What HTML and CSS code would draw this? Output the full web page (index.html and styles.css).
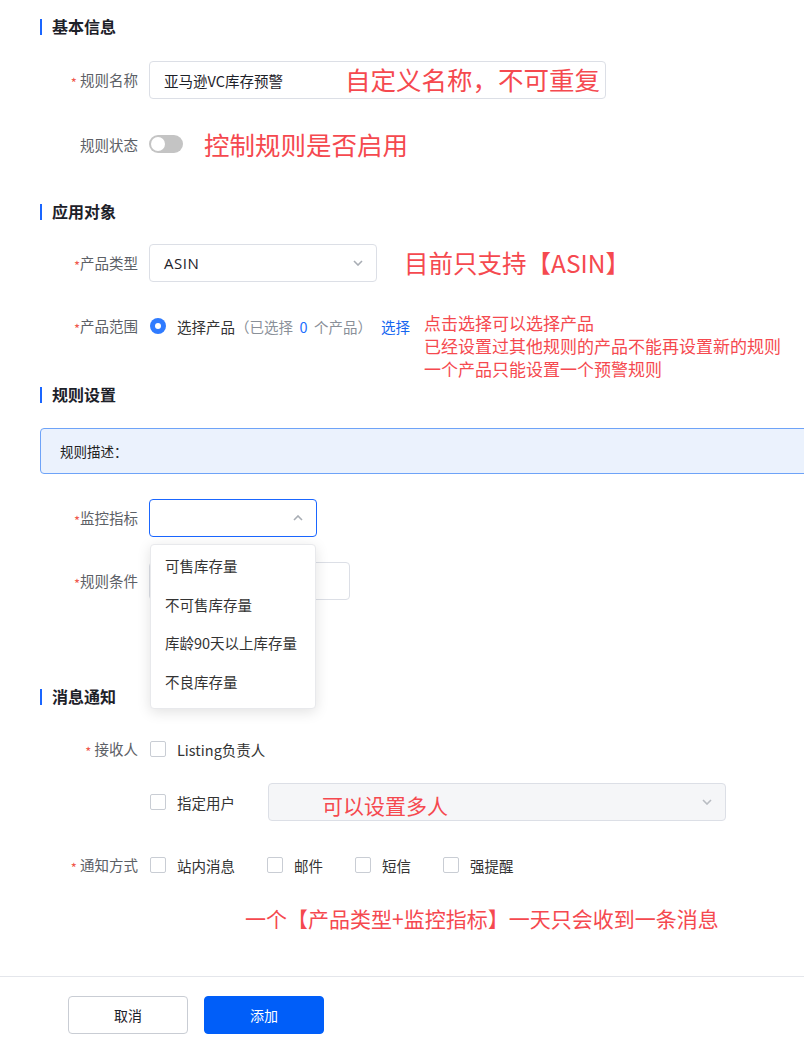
FILE: index.html
```html
<!DOCTYPE html>
<html lang="zh-CN">
<head>
<meta charset="utf-8">
<title>规则</title>
<link rel="stylesheet" href="styles.css">
</head>
<body>
<div class="page">
  <div class="content">
    <div class="sec-title s1"><span class="bar"></span>基本信息</div>
    <div class="row r-name">
      <div class="label"><span class="req">*</span>&nbsp;规则名称</div>
      <div class="input wide">
        <span class="val">亚马逊VC库存预警</span>
        <span class="note big note-name">自定义名称，不可重复</span>
      </div>
    </div>
    <div class="row r-gap26">
      <div class="label">规则状态</div>
      <span class="switch"><span class="knob"></span></span>
      <span class="note big note-switch">控制规则是否启用</span>
    </div>

    <div class="sec-title s2"><span class="bar"></span>应用对象</div>
    <div class="row r-type">
      <div class="label"><span class="req">*</span>产品类型</div>
      <div class="input select type">
        <span class="val latin">ASIN</span>
        <svg class="chev" width="10" height="6" viewBox="0 0 10 6"><path d="M1 1l4 4 4-4" fill="none" stroke="#a8adb4" stroke-width="1.6"/></svg>
      </div>
      <span class="note big note-type">目前只支持【ASIN】</span>
    </div>
    <div class="row r-range">
      <div class="label"><span class="req">*</span>产品范围</div>
      <span class="radio"><span class="dot"></span></span>
      <span class="radio-text">选择产品<span class="muted">（已选择&nbsp;&nbsp;<span class="blue">0</span>&nbsp;&nbsp;个产品）</span></span>
      <span class="link">选择</span>
      <div class="note multi">点击选择可以选择产品<br>已经设置过其他规则的产品不能再设置新的规则<br>一个产品只能设置一个预警规则</div>
    </div>

    <div class="sec-title s3"><span class="bar"></span>规则设置</div>
    <div class="info">规则描述：</div>
    <div class="row r-metric">
      <div class="label"><span class="req">*</span>监控指标</div>
      <div class="input select metric focus">
        <svg class="chev" width="10" height="6" viewBox="0 0 10 6"><path d="M1 5l4-4 4 4" fill="none" stroke="#a8adb4" stroke-width="1.6"/></svg>
        <div class="dropdown">
          <div class="opt">可售库存量</div>
          <div class="opt">不可售库存量</div>
          <div class="opt">库龄90天以上库存量</div>
          <div class="opt">不良库存量</div>
        </div>
      </div>
    </div>
    <div class="row r-cond">
      <div class="label"><span class="req">*</span>规则条件</div>
      <div class="input cond"></div>
    </div>

    <div class="sec-title s4"><span class="bar"></span>消息通知</div>
    <div class="row r-recv">
      <div class="label"><span class="req">*</span>&nbsp;接收人</div>
      <span class="check"><span class="box"></span><span class="ctext">Listing负责人</span></span>
    </div>
    <div class="row r-user">
      <div class="label"></div>
      <span class="check"><span class="box"></span><span class="ctext">指定用户</span></span>
      <div class="input select users disabled">
        <span class="note mid note-users">可以设置多人</span>
        <svg class="chev" width="10" height="6" viewBox="0 0 10 6"><path d="M1 1l4 4 4-4" fill="none" stroke="#b8bcc2" stroke-width="1.6"/></svg>
      </div>
    </div>
    <div class="row r-way">
      <div class="label"><span class="req">*</span>&nbsp;通知方式</div>
      <div class="checks">
        <span class="check"><span class="box"></span><span class="ctext">站内消息</span></span>
        <span class="check"><span class="box"></span><span class="ctext">邮件</span></span>
        <span class="check"><span class="box"></span><span class="ctext">短信</span></span>
        <span class="check"><span class="box"></span><span class="ctext">强提醒</span></span>
      </div>
    </div>
    <div class="note mid note-bottom">一个【产品类型+监控指标】一天只会收到一条消息</div>
  </div>

  <div class="footer">
    <button class="btn cancel">取消</button>
    <button class="btn primary">添加</button>
  </div>
</div>
</body>
</html>
```

FILE: styles.css
```css
html, body {
  margin: 0;
  padding: 0;
  overflow: hidden;
  background: #fff;
}
body {
  width: 804px;
  height: 1044px;
  font-family: "Noto Sans CJK SC", "Noto Sans", sans-serif;
  font-size: 14.5px;
  color: #1d2129;
}
.page {
  display: flex;
  flex-direction: column;
}
.content {
  padding-left: 40px;
  display: flex;
  flex-direction: column;
}
.sec-title {
  display: flex;
  align-items: center;
  height: 17px;
  font-size: 16px;
  font-weight: 700;
  color: #1d2129;
  line-height: 17px;
}
.sec-title .bar {
  width: 2px;
  height: 16px;
  background: #1a66ff;
  margin-right: 10px;
}
.s1 { margin-top: 18px; }
.s2 { margin-top: 40px; }
.s3 { margin-top: 41px; }
.s4 { margin-top: 88px; }

.row {
  display: flex;
  align-items: center;
  height: 38px;
}
.r-name { margin-top: 26px; }
.r-gap26 { margin-top: 26px; }
.r-type { margin-top: 24px; }
.r-range { margin-top: 25px; }
.r-metric { margin-top: 25px; }
.r-cond { margin-top: 25px; }
.r-recv { margin-top: 25px; }
.r-user { margin-top: 15px; }
.r-way { margin-top: 25px; }

.label {
  width: 98px;
  flex: none;
  text-align: right;
  color: #5c6066;
  font-size: 14.5px;
  margin-right: 11px;
  white-space: nowrap;
}
.req {
  color: #f0584c;
  font-size: 13px;
  vertical-align: -2px;
}

.input {
  position: relative;
  box-sizing: border-box;
  height: 38px;
  border: 1px solid #dcdfe6;
  border-radius: 4px;
  display: flex;
  align-items: center;
  padding-left: 14px;
  background: #fff;
}
.input .val {
  font-size: 14.5px;
  color: #1d2129;
}
.input .latin {
  font-family: "Open Sans", "Noto Sans", sans-serif;
  font-size: 15px;
  letter-spacing: 0.5px;
}
.wide { width: 457px; }
.type { width: 228px; }
.metric { width: 168px; }
.cond { width: 201px; }
.users { width: 458px; margin-left: 33px; }
.disabled { background: #f5f6f8; }
.focus { border-color: #1a66ff; }
.chev {
  position: absolute;
  right: 13px;
  top: 15px;
}

.note {
  color: #f5494f;
  white-space: nowrap;
  line-height: 1.1;
}
.big { font-size: 25.5px; }
.mid { font-size: 21px; }
.note-name {
  position: absolute;
  left: 195px;
  top: 3px;
}
.note-switch { margin-left: 21px; }
.note-type { margin-left: 27px; font-size: 24.5px; }
.note-users {
  position: absolute;
  left: 53px;
  top: 10px;
}
.multi {
  align-self: flex-start;
  margin-top: 4px;
  margin-left: 14px;
  font-size: 17px;
  line-height: 23px;
}
.note-bottom {
  margin-top: 20px;
  margin-left: 205px;
  line-height: 28px;
}

.switch {
  width: 34px;
  height: 18px;
  border-radius: 9px;
  background: #c4c4c4;
  display: flex;
  align-items: center;
  padding-left: 2px;
  box-sizing: border-box;
}
.knob {
  width: 14px;
  height: 14px;
  border-radius: 50%;
  background: #fff;
}

.radio {
  width: 16px;
  height: 16px;
  border-radius: 50%;
  background: #2f7bff;
  display: flex;
  align-items: center;
  justify-content: center;
  margin-left: 1px;
}
.radio .dot {
  width: 6px;
  height: 6px;
  border-radius: 50%;
  background: #fff;
}
.radio-text {
  margin-left: 11px;
  font-size: 14.5px;
  color: #333;
}
.muted { color: #8a9099; }
.blue { color: #1e6fff; }
.link {
  margin-left: 9px;
  color: #1466f0;
  font-size: 14.5px;
}

.info {
  box-sizing: border-box;
  margin-top: 25px;
  margin-right: -20px;
  height: 46px;
  border: 1px solid #6ea3f8;
  border-radius: 4px;
  background: #ebf2fd;
  display: flex;
  align-items: center;
  padding-left: 19px;
  font-size: 13.5px;
  color: #222;
}

.dropdown {
  position: absolute;
  left: 0;
  top: 44px;
  width: 166px;
  box-sizing: border-box;
  padding: 2px 0 7px;
  background: #fff;
  border: 1px solid #e8e9ec;
  border-radius: 4px;
  box-shadow: 0 3px 14px rgba(0, 0, 0, 0.12);
  z-index: 5;
}
.opt {
  height: 38.5px;
  line-height: 38.5px;
  padding-left: 14px;
  font-size: 14.5px;
  color: #333;
}

.check {
  display: flex;
  align-items: center;
}
.box {
  width: 16px;
  height: 16px;
  box-sizing: border-box;
  border: 1px solid #c9cdd4;
  border-radius: 2px;
  background: #fff;
  margin-left: 1px;
}
.ctext {
  margin-left: 11px;
  font-size: 14.5px;
  color: #333;
}
.checks {
  display: flex;
  gap: 31px;
}

.footer {
  margin-top: 44px;
  border-top: 1px solid #e4e6eb;
  padding-top: 19px;
  padding-left: 68px;
  display: flex;
  gap: 16px;
}
.btn {
  width: 120px;
  height: 38px;
  border-radius: 4px;
  font-family: "Noto Sans CJK SC", "Noto Sans", sans-serif;
  font-size: 14px;
  cursor: pointer;
}
.cancel {
  background: #fff;
  border: 1px solid #c9cdd4;
  color: #1d2129;
}
.primary {
  background: #005ef9;
  border: 1px solid #005ef9;
  color: #fff;
}
```
